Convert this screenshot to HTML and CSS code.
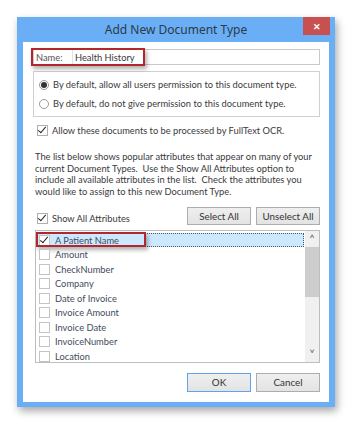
FILE: index.html
```html
<!DOCTYPE html>
<html lang="en">
<head>
  <meta charset="UTF-8" />
  <title>Add New Document Type</title>
  <link rel="stylesheet" href="styles.css">
</head>
<body>
  <div class="window">
    <div class="titlebar">
      <span class="title">Add New Document Type</span>
      <span class="close">&#x2715;</span>
    </div>
    <div class="client">
      <div class="name-field">
        <span class="name-label">Name:</span>
        <span class="name-value">Health History</span>
        <span class="mark mark-name"></span>
      </div>

      <div class="group">
        <div class="radio-row"><span class="radio on"></span>By default, allow all users permission to this document type.</div>
        <div class="radio-row"><span class="radio"></span>By default, do not give permission to this document type.</div>
      </div>

      <div class="check-row ocr"><span class="check on"></span>Allow these documents to be processed by FullText OCR.</div>

      <p class="info">The list below shows popular attributes that appear on many of your<br>current Document Types.&nbsp; Use the Show All Attributes option to<br>include all available attributes in the list.&nbsp; Check the attributes you<br>would like to assign to this new Document Type.</p>

      <div class="tools">
        <div class="check-row"><span class="check on"></span>Show All Attributes</div>
        <button class="btn">Select All</button>
        <button class="btn">Unselect All</button>
      </div>

      <div class="list">
        <div class="rows">
          <div class="row selected"><span class="check on"></span>A Patient Name<span class="mark mark-row"></span></div>
          <div class="row"><span class="check"></span>Amount</div>
          <div class="row"><span class="check"></span>CheckNumber</div>
          <div class="row"><span class="check"></span>Company</div>
          <div class="row"><span class="check"></span>Date of Invoice</div>
          <div class="row"><span class="check"></span>Invoice Amount</div>
          <div class="row"><span class="check"></span>Invoice Date</div>
          <div class="row"><span class="check"></span>InvoiceNumber</div>
          <div class="row"><span class="check"></span>Location</div>
        </div>
        <div class="scrollbar">
          <span class="arrow">&#x2C4;</span>
          <span class="thumb"></span>
          <span class="track"></span>
          <span class="arrow">&#x2C5;</span>
        </div>
      </div>

      <div class="footer">
        <button class="btn default">OK</button>
        <button class="btn">Cancel</button>
      </div>
    </div>
  </div>
</body>
</html>
```

FILE: styles.css
```css
body {
  margin: 0;
  padding: 17px;
  background: #fff;
  font-family: Lato, "Noto Sans", sans-serif;
  color: #3a3a3a;
}
.window {
  width: 306px;
  border: 6px solid #6aaef5;
  border-top: 0;
  border-bottom-width: 5px;
  box-shadow: 2px 4px 8px rgba(0, 0, 0, 0.35);
}
.titlebar {
  height: 25px;
  background: #6aaef5;
  margin: 0 -6px;
  position: relative;
  display: flex;
  align-items: center;
  justify-content: center;
}
.title {
  font-family: "Noto Sans", sans-serif;
  font-size: 12px;
  color: #2d3a48;
}
.close {
  position: absolute;
  right: 5px;
  top: 0;
  width: 27px;
  height: 18px;
  background: #c75050;
  color: #fff;
  font-size: 9px;
  font-weight: bold;
  display: flex;
  align-items: center;
  justify-content: center;
}
.client {
  background: #fff;
  height: 353px;
  padding: 7px 9px 0 10px;
  font-size: 9.3px;
  white-space: nowrap;
}
.name-field {
  position: relative;
  height: 14px;
  border: 1px solid #c9c9c9;
  display: flex;
  align-items: center;
}
.name-label {
  width: 36px;
  height: 100%;
  padding-left: 2px;
  border-right: 1px solid #e2e2e2;
  display: flex;
  align-items: center;
  color: #555;
}
.name-value {
  padding-left: 2px;
}
.mark {
  position: absolute;
  border: 2px solid #b3262c;
  box-shadow: 2px 3px 4px rgba(0, 0, 0, 0.3);
}
.mark-name {
  left: -3px;
  top: -2px;
  width: 110px;
  height: 14px;
}
.group {
  margin-top: 6px;
  height: 44px;
  border: 1px solid #d0d0d0;
  display: flex;
  flex-direction: column;
  justify-content: center;
  gap: 5px;
  padding-left: 5px;
}
.radio-row, .check-row {
  display: flex;
  align-items: center;
  gap: 4px;
  height: 14px;
}
.radio {
  width: 8px;
  height: 8px;
  border: 1px solid #9a9a9a;
  border-radius: 50%;
  background: #fff;
  display: flex;
  align-items: center;
  justify-content: center;
}
.radio.on::after {
  content: "";
  width: 6px;
  height: 6px;
  border-radius: 50%;
  background: #333;
}
.check {
  width: 9px;
  height: 9px;
  border: 1px solid #b0b0b0;
  background: #fff;
  position: relative;
  flex-shrink: 0;
}
.check.on::after {
  content: "";
  position: absolute;
  left: 2px;
  top: -1px;
  width: 3px;
  height: 7px;
  border: solid #222;
  border-width: 0 1.5px 1.5px 0;
  transform: rotate(40deg);
}
.ocr {
  margin-top: 6px;
  padding-left: 4px;
}
.info {
  margin: 14px 0 0 2px;
  line-height: 11.7px;
}
.tools {
  margin-top: 9px;
  display: flex;
  align-items: center;
  gap: 5px;
  padding-left: 4px;
}
.tools .check-row {
  flex: 1;
  margin-top: 5px;
}
.btn {
  width: 64px;
  height: 18px;
  padding: 0;
  font: inherit;
  font-size: 9.8px;
  color: #333;
  background: linear-gradient(#efefef, #e3e3e3);
  border: 1px solid #adadad;
}
.btn.default {
  border-color: #5fa3ec;
}
.list {
  margin: 4px 0 0 2px;
  height: 131px;
  border: 1px solid #bdbdbd;
  display: flex;
}
.rows {
  flex: 1;
  padding: 2px 0 0 1px;
}
.row {
  position: relative;
  height: 14.5px;
  display: flex;
  align-items: center;
  gap: 5px;
  padding-left: 2px;
  box-sizing: border-box;
  color: #444b5c;
}
.row .check {
  border-color: #c4c4c4;
}
.row.selected {
  background: #cce8ff;
  border: 1px dotted #555;
  padding-left: 1px;
}
.mark-row {
  left: -2px;
  top: -2px;
  width: 106px;
  height: 11px;
}
.scrollbar {
  width: 14px;
  display: flex;
  flex-direction: column;
  background: #f0f0f0;
  margin-left: 1px;
}
.arrow {
  height: 16px;
  font-size: 11px;
  line-height: 16px;
  text-align: center;
  color: #606060;
}
.thumb {
  height: 50px;
  background: #cdcdcd;
}
.track {
  flex: 1;
}
.footer {
  margin-top: 10px;
  display: flex;
  justify-content: flex-end;
  gap: 5px;
}
.footer .btn {
  height: 19px;
}
```
